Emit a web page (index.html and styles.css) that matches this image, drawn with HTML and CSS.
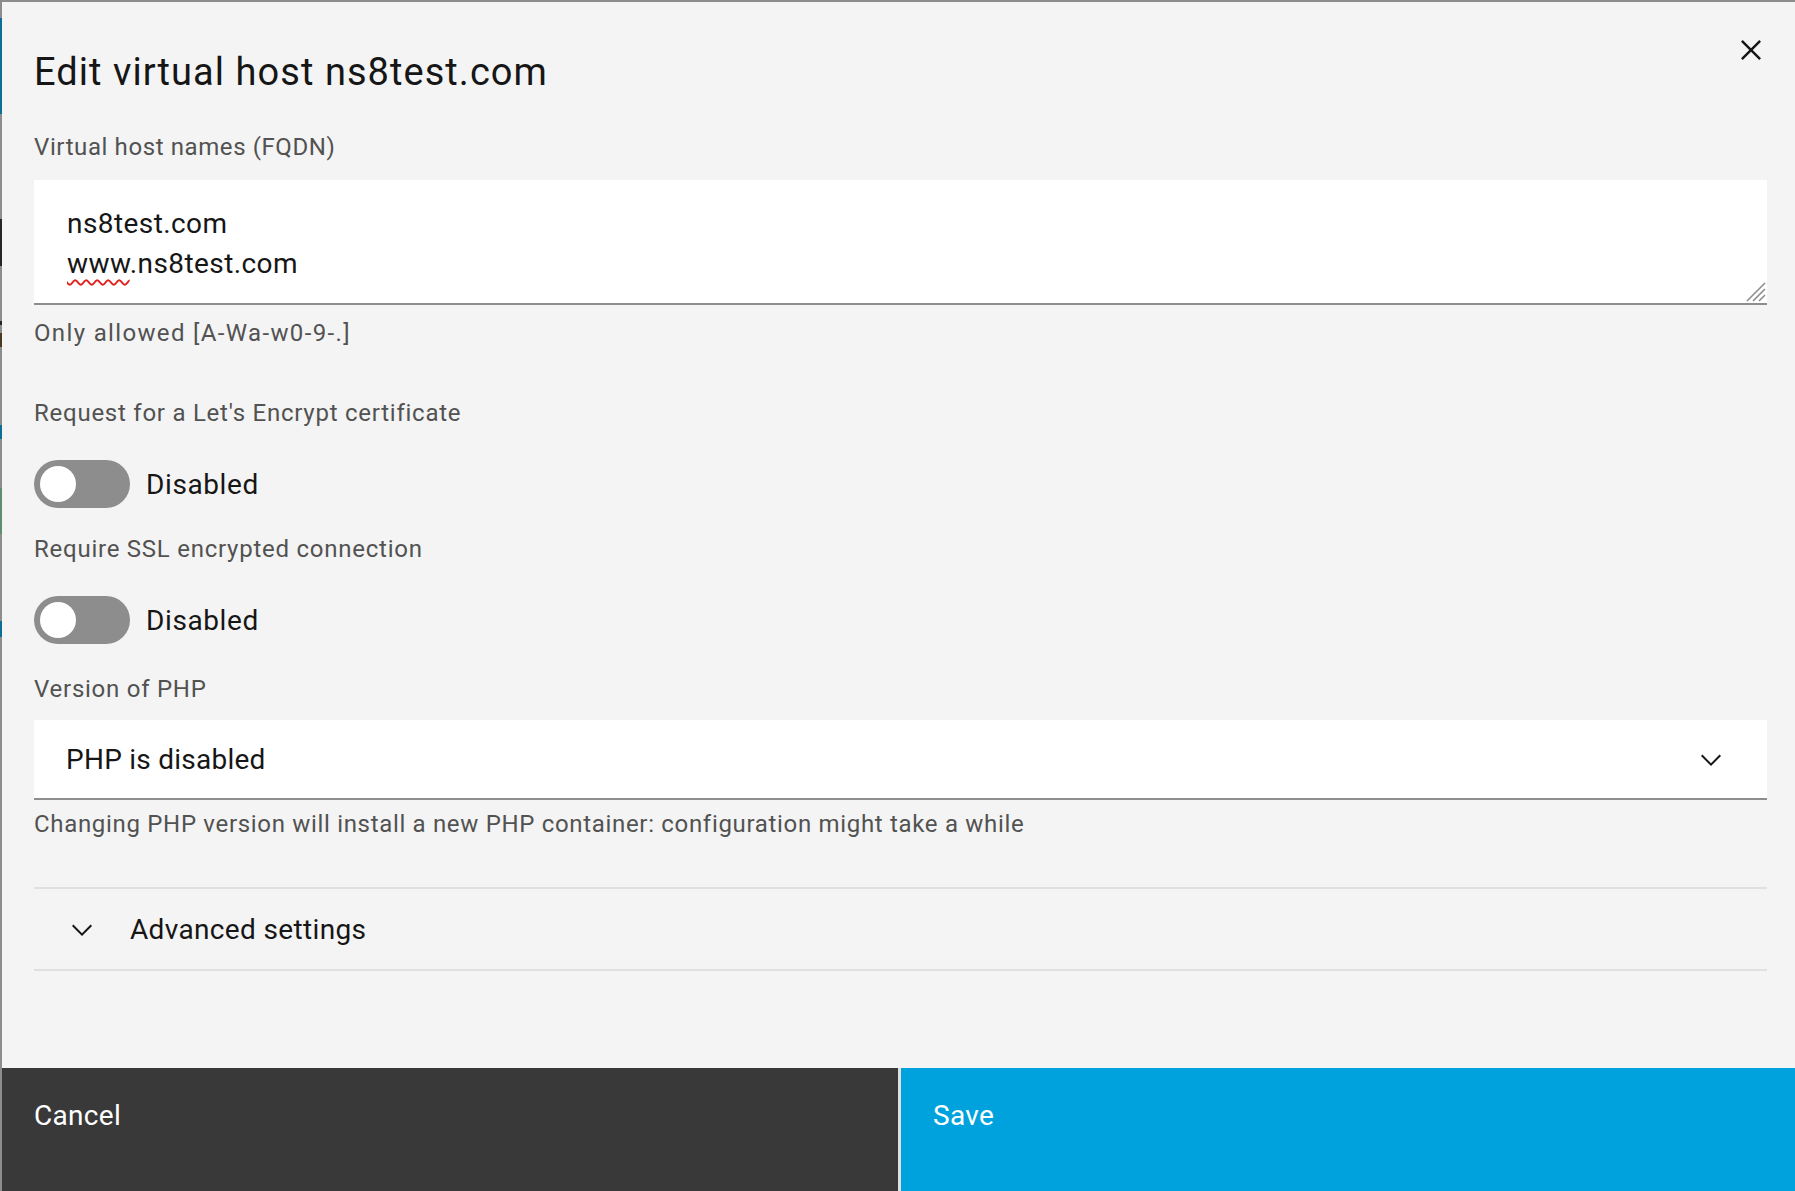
FILE: index.html
```html
<!DOCTYPE html>
<html lang="en">
<head>
<meta charset="utf-8">
<title>Edit virtual host</title>
<link rel="stylesheet" href="styles.css">
</head>
<body>
<div class="edge">
  <div class="seg gap-a"></div>
  <div class="seg blue s1"></div>
  <div class="seg gap-b"></div>
  <div class="seg dark s2"></div>
  <div class="seg gap-c"></div>
  <div class="seg dark s3"></div>
  <div class="seg gap-d"></div>
  <div class="seg orange s4"></div>
  <div class="seg gap-e"></div>
  <div class="seg blue s5"></div>
  <div class="seg gap-f"></div>
  <div class="seg green s6"></div>
  <div class="seg gap-g"></div>
  <div class="seg blue s7"></div>
</div>
<div class="modal">
  <header class="modal-header">
    <h2 class="title">Edit virtual host ns8test.com</h2>
    <button class="close" aria-label="Close">
      <svg viewBox="0 0 16 16" width="40" height="40"><path d="M12 4.7L11.3 4 8 7.3 4.7 4 4 4.7 7.3 8 4 11.3 4.7 12 8 8.7 11.3 12 12 11.3 8.7 8z" fill="#161616"/></svg>
    </button>
  </header>
  <div class="modal-body">
    <div class="label l-hosts">Virtual host names (FQDN)</div>
    <div class="textarea">
      <div class="line">ns8test.com</div>
      <div class="line"><span class="spell">www</span>.ns8test.com</div>
      <svg class="resize" viewBox="0 0 20 20" width="20" height="20">
        <path d="M1 19L19 1M7 19L19 7M13 19L19 13" stroke="#8d8d8d" stroke-width="1.6" fill="none"/>
      </svg>
    </div>
    <div class="helper h-hosts">Only allowed [A-Wa-w0-9-.]</div>

    <div class="label l-le">Request for a Let's Encrypt certificate</div>
    <div class="toggle-row t-le">
      <span class="toggle"><span class="knob"></span></span>
      <span class="toggle-text">Disabled</span>
    </div>

    <div class="label l-ssl">Require SSL encrypted connection</div>
    <div class="toggle-row t-ssl">
      <span class="toggle"><span class="knob"></span></span>
      <span class="toggle-text">Disabled</span>
    </div>

    <div class="label l-php">Version of PHP</div>
    <div class="select">
      <span class="select-text">PHP is disabled</span>
      <svg class="chev" viewBox="0 0 16 16" width="32" height="32"><path d="M8 11L3 6 3.7 5.3 8 9.6 12.3 5.3 13 6z" fill="#161616"/></svg>
    </div>
    <div class="helper h-php">Changing PHP version will install a new PHP container: configuration might take a while</div>

    <div class="accordion">
      <div class="acc-row">
        <svg class="acc-chev" viewBox="0 0 16 16" width="32" height="32"><path d="M8 11L3 6 3.7 5.3 8 9.6 12.3 5.3 13 6z" fill="#161616"/></svg>
        <span class="acc-title">Advanced settings</span>
      </div>
    </div>
  </div>
  <footer class="modal-footer">
    <button class="btn secondary">Cancel</button>
    <span class="btn-sep"></span>
    <button class="btn primary">Save</button>
  </footer>
</div>
</body>
</html>
```
FILE: styles.css
```css
html, body {
  margin: 0;
  padding: 0;
}
body {
  width: 1795px;
  height: 1191px;
  overflow: hidden;
  display: flex;
  background: #8d8d8d;
  font-family: Roboto, "Liberation Sans", sans-serif;
  color: #161616;
}
.edge {
  width: 2px;
  flex: none;
  display: flex;
  flex-direction: column;
}
.seg { width: 2px; flex: none; }
.gap-a { height: 18px; }
.s1 { height: 96px; }
.gap-b { height: 105px; }
.s2 { height: 47px; }
.gap-c { height: 55px; }
.s3 { height: 4px; }
.gap-d { height: 8px; }
.s4 { height: 14px; }
.gap-e { height: 78px; }
.s5 { height: 14px; }
.gap-f { height: 49px; }
.s6 { height: 46px; }
.gap-g { height: 87px; }
.s7 { height: 16px; }
.blue { background: #0e6e96; }
.dark { background: #262626; }
.orange { background: #4a3a22; }
.green { background: #5e8e6e; }

.modal {
  flex: 1;
  margin-top: 2px;
  height: 1189px;
  background: #f4f4f4;
  display: flex;
  flex-direction: column;
}
.modal-header {
  display: flex;
  justify-content: space-between;
  align-items: flex-start;
  padding-left: 32px;
}
.title {
  margin: 46px 0 0 0;
  font-size: 38px;
  line-height: 48px;
  font-weight: 400;
  letter-spacing: 1.05px;
  color: #161616;
}
.close {
  border: 0;
  background: transparent;
  padding: 0;
  margin: 28px 24px 0 0;
  width: 40px;
  height: 40px;
  display: flex;
}
.modal-body {
  flex: 1;
  padding: 0 28px 0 32px;
  display: flex;
  flex-direction: column;
}
.label {
  font-size: 24px;
  line-height: 32px;
  letter-spacing: 0.75px;
  color: #525252;
}
.helper {
  font-size: 24px;
  line-height: 32px;
  letter-spacing: 0.68px;
  color: #525252;
}
.l-hosts { margin-top: 35px; letter-spacing: 0.6px; }
.textarea {
  margin-top: 17px;
  box-sizing: border-box;
  padding: 24px 33px 0 33px;
  background: #ffffff;
  border-bottom: 2px solid #8d8d8d;
  height: 125px;
  position: relative;
  font-size: 28px;
  line-height: 40px;
  letter-spacing: 0.42px;
}
.spell {
  text-decoration: underline wavy #e0211c;
  text-decoration-thickness: 1.5px;
  text-underline-offset: 6px;
}
.resize {
  position: absolute;
  right: 1px;
  bottom: 1px;
}
.h-hosts { margin-top: 12px; letter-spacing: 1.35px; }
.l-le { margin-top: 48px; }
.toggle-row {
  display: flex;
  align-items: center;
  gap: 16px;
  height: 48px;
}
.t-le { margin-top: 31px; }
.t-ssl { margin-top: 31px; }
.toggle {
  width: 96px;
  height: 48px;
  border-radius: 24px;
  background: #8d8d8d;
  display: flex;
  align-items: center;
  padding-left: 6px;
  box-sizing: border-box;
}
.knob {
  width: 36px;
  height: 36px;
  border-radius: 50%;
  background: #ffffff;
}
.toggle-text {
  font-size: 28px;
  line-height: 48px;
  letter-spacing: 0.6px;
  color: #161616;
  padding-top: 2px;
}
.l-ssl { margin-top: 25px; }
.l-php { margin-top: 29px; }
.select {
  margin-top: 15px;
  height: 80px;
  box-sizing: border-box;
  background: #ffffff;
  border-bottom: 2px solid #8d8d8d;
  display: flex;
  align-items: center;
  justify-content: space-between;
  padding: 0 40px 0 32px;
}
.select-text {
  font-size: 28px;
  line-height: 40px;
  letter-spacing: 0.25px;
  padding-top: 1px;
}
.chev { margin-top: 2px; }
.h-php { margin-top: 8px; }
.accordion {
  margin-top: 47px;
  border-top: 2px solid #e0e0e0;
  border-bottom: 2px solid #e0e0e0;
}
.acc-row {
  height: 80px;
  display: flex;
  align-items: center;
  padding-left: 32px;
}
.acc-chev { margin-top: 2px; }
.acc-title {
  margin-left: 32px;
  font-size: 28px;
  line-height: 40px;
  letter-spacing: 0.35px;
  padding-top: 2px;
}
.modal-footer {
  height: 123px;
  display: flex;
  flex: none;
}
.btn {
  border: 0;
  margin: 0;
  font-family: Roboto, "Liberation Sans", sans-serif;
  font-size: 28px;
  line-height: 40px;
  letter-spacing: 0.3px;
  color: #ffffff;
  text-align: left;
  display: flex;
  align-items: flex-start;
  padding: 28px 32px 0 32px;
  height: 123px;
  box-sizing: border-box;
}
.secondary {
  width: 896px;
  background: #393939;
}
.btn-sep {
  width: 3px;
  background: #e0e0e0;
  flex: none;
}
.primary {
  flex: 1;
  background: #00a2de;
  padding-left: 32px;
}
```
